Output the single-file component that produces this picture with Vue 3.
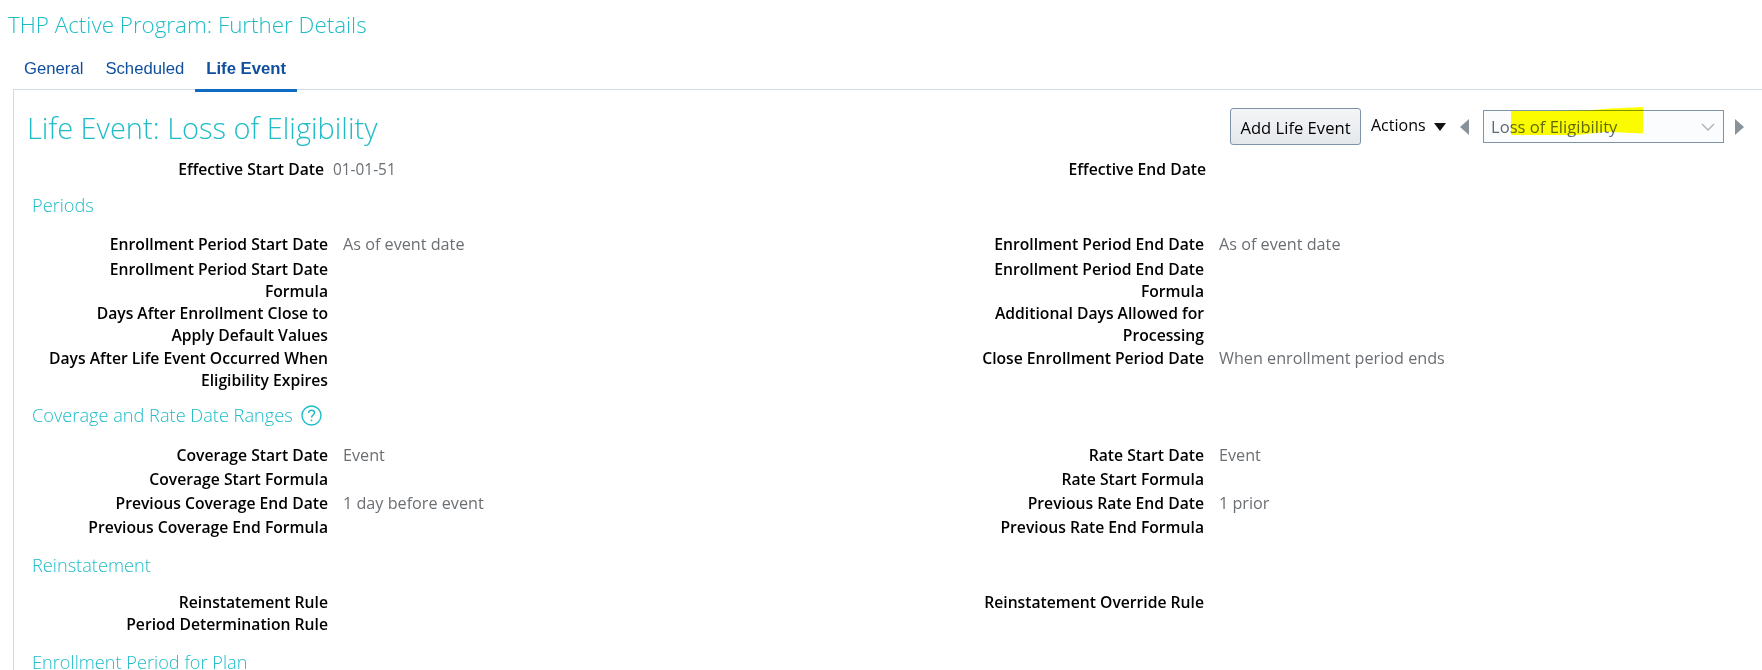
<script setup>
const periods = [
  { l: 'Enrollment Period Start Date', v: 'As of event date', rl: 'Enrollment Period End Date', rv: 'As of event date' },
  { l: 'Enrollment Period Start Date\nFormula', rl: 'Enrollment Period End Date\nFormula' },
  { l: 'Days After Enrollment Close to\nApply Default Values', rl: 'Additional Days Allowed for\nProcessing' },
  { l: 'Days After Life Event Occurred When\nEligibility Expires', rl: 'Close Enrollment Period Date', rv: 'When enrollment period ends' }
]
const coverage = [
  { l: 'Coverage Start Date', v: 'Event', rl: 'Rate Start Date', rv: 'Event' },
  { l: 'Coverage Start Formula', rl: 'Rate Start Formula' },
  { l: 'Previous Coverage End Date', v: '1 day before event', rl: 'Previous Rate End Date', rv: '1 prior' },
  { l: 'Previous Coverage End Formula', rl: 'Previous Rate End Formula' }
]
const reinstatement = [
  { l: 'Reinstatement Rule', rl: 'Reinstatement Override Rule' },
  { l: 'Period Determination Rule' }
]
</script>

<template>
  <div class="page">
    <h1 class="page-title">THP Active Program: Further Details</h1>
    <div class="tabs">
      <a class="tab">General</a>
      <a class="tab">Scheduled</a>
      <a class="tab active">Life Event</a>
    </div>
    <div class="panel">
      <div class="panel-head">
        <h2 class="panel-title">Life Event: Loss of Eligibility</h2>
        <div class="tools">
          <button class="add-btn">Add Life Event</button>
          <span class="actions">Actions <i class="tri-down"></i></span>
          <i class="arrow left"></i>
          <div class="select">
            <span class="sel-text">Loss of Eligibility</span>
            <span class="marker"></span>
            <svg class="chev" width="14" height="8" viewBox="0 0 14 8"><path d="M1 1l6 6 6-6" fill="none" stroke="#a9b2ba" stroke-width="1.3"/></svg>
          </div>
          <i class="arrow right"></i>
        </div>
      </div>

      <div class="eff">
        <div class="lbl">Effective Start Date</div>
        <div class="eff-val">01-01-51</div>
        <div class="lbl">Effective End Date</div>
      </div>

      <h3 class="section periods">Periods</h3>
      <div class="form spaced">
        <template v-for="r in periods" :key="r.l">
          <div class="lbl">{{ r.l }}</div><div class="val">{{ r.v }}</div>
          <div class="lbl">{{ r.rl }}</div><div class="val">{{ r.rv }}</div>
        </template>
      </div>

      <h3 class="section coverage">
        Coverage and Rate Date Ranges
        <svg class="help" width="21" height="21" viewBox="0 0 21 21">
          <circle cx="10.5" cy="10.5" r="9.5" fill="none" stroke="#1fbcc8" stroke-width="1.4"/>
          <path d="M7.6 8.1c0-1.7 1.3-2.8 3-2.8s2.9 1 2.9 2.5c0 2.3-3 2.4-3 4.8" fill="none" stroke="#1fbcc8" stroke-width="1.4"/>
          <circle cx="10.5" cy="15.4" r="0.9" fill="#1fbcc8"/>
        </svg>
      </h3>
      <div class="form">
        <template v-for="r in coverage" :key="r.l">
          <div class="lbl">{{ r.l }}</div><div class="val">{{ r.v }}</div>
          <div class="lbl">{{ r.rl }}</div><div class="val">{{ r.rv }}</div>
        </template>
      </div>

      <h3 class="section reinst">Reinstatement</h3>
      <div class="form tight">
        <template v-for="r in reinstatement" :key="r.l">
          <div class="lbl">{{ r.l }}</div><div class="val">{{ r.v }}</div>
          <div class="lbl">{{ r.rl }}</div><div class="val">{{ r.rv }}</div>
        </template>
      </div>

      <h3 class="section plan">Enrollment Period for Plan</h3>
    </div>
  </div>
</template>

<style>
html, body {
  margin: 0;
  background: #fff;
  overflow: hidden;
}
</style>

<style scoped>
.page {
  height: 670px;
  overflow: hidden;
  font-family: "Open Sans", "Noto Sans", sans-serif;
  color: #000;
}
.page-title {
  margin: 0;
  padding: 11px 0 0 8px;
  height: 39px;
  font-size: 22.4px;
  line-height: 28px;
  font-weight: 300;
  color: #1fbcc8;
}
.tabs {
  display: flex;
  padding-left: 13px;
  height: 39px;
}
.tab {
  padding: 9px 11px 0;
  height: 30px;
  font-family: "Liberation Sans", Arial, sans-serif;
  font-size: 16.7px;
  line-height: 20px;
  color: #0f4f9e;
}
.tab.active {
  font-weight: 700;
  border-bottom: 3px solid #0e6ac2;
}
.panel {
  margin-left: 13px;
  border-top: 1px solid #d3dbe1;
  border-left: 1px solid #d3dbe1;
  padding: 0 0 0 13px;
}
.panel-head {
  display: flex;
  justify-content: space-between;
  align-items: flex-start;
  height: 63px;
}
.panel-title {
  margin: 0;
  padding-top: 18px;
  font-size: 29px;
  line-height: 40px;
  font-weight: 300;
  color: #1fbcc8;
}
.tools {
  display: flex;
  align-items: center;
  padding-top: 18px;
  margin-right: 18px;
}
.add-btn {
  width: 131px;
  height: 37px;
  padding: 2px 0 0;
  border: 1px solid #7d93a8;
  border-radius: 3px;
  background: linear-gradient(#f3f5f7, #e5e8eb);
  font-family: inherit;
  font-size: 16.6px;
  font-weight: 500;
  color: #000;
}
.actions {
  margin-left: 10px;
  font-size: 16px;
  width: 89px;
  margin-top: -4px;
}
.tri-down {
  display: inline-block;
  margin-left: 4px;
  border-left: 6px solid transparent;
  border-right: 6px solid transparent;
  border-top: 8px solid #111;
}
.arrow {
  width: 0;
  height: 0;
  border-top: 8px solid transparent;
  border-bottom: 8px solid transparent;
}
.arrow.left {
  border-right: 9px solid #8a9299;
  margin-right: 14px;
}
.arrow.right {
  border-left: 9px solid #8a9299;
  margin-left: 11px;
}
.select {
  position: relative;
  width: 241px;
  height: 33px;
  box-sizing: border-box;
  border: 1px solid #7d93a8;
  background: #fbfcfe;
  display: flex;
  align-items: center;
  justify-content: space-between;
  padding: 0 8px 0 7px;
}
.sel-text {
  font-size: 16.6px;
  font-weight: 500;
  color: #5f6a72;
}
.marker {
  position: absolute;
  left: 27px;
  top: -4px;
  width: 132px;
  height: 28px;
  background: #ffff00;
  mix-blend-mode: multiply;
  clip-path: polygon(0 14%, 30% 14%, 60% 12%, 75% 5%, 100% 0, 100% 95%, 72% 88%, 50% 100%, 0 100%);
}
.eff {
  display: grid;
  grid-template-columns: 297px 586px 296px;
  height: 26px;
  margin-top: 3px;
  align-items: center;
}
.eff-val {
  padding-left: 9px;
  font-size: 15.4px;
  font-weight: 500;
  color: #6b6f73;
}
.section {
  padding-left: 5px;
  font-size: 18.2px;
  line-height: 24px;
  font-weight: 300;
  color: #1fbcc8;
  display: flex;
  align-items: center;
  gap: 8px;
  margin: 11px 0 16px;
}
.section.coverage {
  margin: 12px 0 17px;
}
.section.reinst {
  margin: 13px 0 14px;
}
.section.plan {
  margin-top: 15px;
}
.form {
  display: grid;
  grid-template-columns: 301px 591px 285px 1fr;
  grid-auto-rows: minmax(24px, auto);
}
.form.spaced {
  row-gap: 0.7px;
}
.form.tight {
  grid-auto-rows: minmax(22px, auto);
}
.lbl {
  font-size: 15.7px;
  line-height: 22px;
  font-weight: 600;
  text-align: right;
  white-space: pre-line;
}
.val {
  padding-left: 15px;
  font-size: 16.2px;
  line-height: 22px;
  font-weight: 500;
  color: #6b6f73;
}
</style>
